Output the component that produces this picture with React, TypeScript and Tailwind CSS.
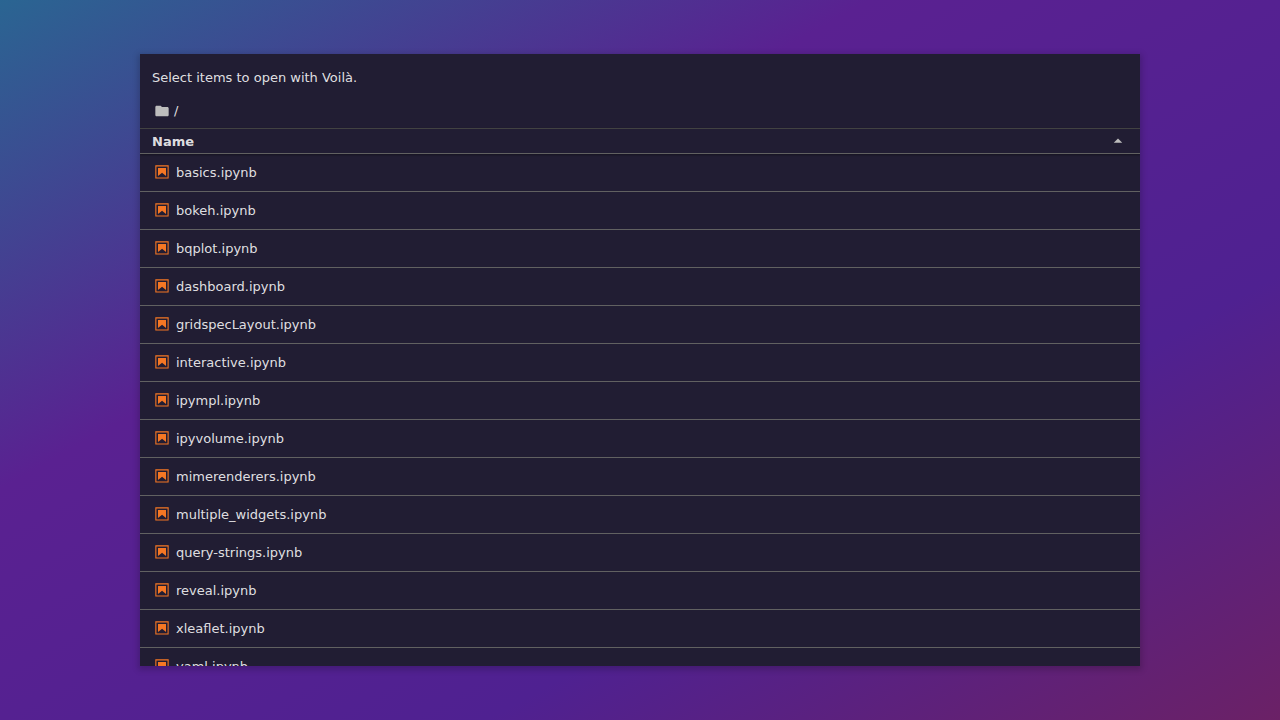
const notebooks = [
  'basics.ipynb',
  'bokeh.ipynb',
  'bqplot.ipynb',
  'dashboard.ipynb',
  'gridspecLayout.ipynb',
  'interactive.ipynb',
  'ipympl.ipynb',
  'ipyvolume.ipynb',
  'mimerenderers.ipynb',
  'multiple_widgets.ipynb',
  'query-strings.ipynb',
  'reveal.ipynb',
  'xleaflet.ipynb',
  'yaml.ipynb',
];

function FolderIcon() {
  return (
    <svg className="size-4 shrink-0 fill-[#bdbdbd]" viewBox="0 0 24 24">
      <path d="M10 4H4c-1.1 0-1.99.9-1.99 2L2 18c0 1.1.9 2 2 2h16c1.1 0 2-.9 2-2V8c0-1.1-.9-2-2-2h-8l-2-2z" />
    </svg>
  );
}

function NotebookIcon() {
  return (
    <svg className="mb-px size-4 shrink-0 fill-[#f57724]" viewBox="0 0 22 22">
      <path d="M18.7 3.3v15.4H3.3V3.3h15.4m1.5-1.5H1.8v18.3h18.3l.1-18.3z" />
      <path d="M16.5 16.5l-5.4-4.3-5.6 4.3v-11h11z" />
    </svg>
  );
}

function CaretUpIcon() {
  return (
    <svg className="size-5 shrink-0 fill-[#bdbdbd]" viewBox="0 0 18 18">
      <path d="M5.2,10.5L9,6.8l3.8,3.8H5.2z" />
    </svg>
  );
}

export default function App() {
  return (
    <div className="flex h-screen w-screen items-start justify-center overflow-hidden bg-[linear-gradient(to_bottom_right,#2a6592,#5a2191_34%,#4f2191_69%,#6b2166)] pt-[54px] font-['DejaVu_Sans',sans-serif] text-[13px] text-white/87">
      <main className="flex h-[612px] w-[1000px] flex-col overflow-hidden bg-[#211d33] shadow-[0_2px_6px_2px_rgba(0,0,0,0.18)]">
        <p className="px-3 pt-[13px] leading-[22px]">Select items to open with Voilà.</p>
        <nav className="mt-[11px] flex h-[22px] shrink-0 items-center gap-1 px-3.5">
          <FolderIcon />
          <span>/</span>
        </nav>
        <header className="relative mt-1.5 flex h-[26px] shrink-0 items-center justify-between border-y border-t-[#424242] border-b-[#616161] px-3 font-bold shadow-[0_1px_2px_rgba(0,0,0,0.4)]">
          <span className="pt-px">Name</span>
          <CaretUpIcon />
        </header>
        <ul>
          {notebooks.map((name) => (
            <li key={name} className="flex h-[38px] items-center gap-1.5 border-b border-[#616161] pr-3 pl-3.5">
              <NotebookIcon />
              <span>{name}</span>
            </li>
          ))}
        </ul>
      </main>
    </div>
  );
}
